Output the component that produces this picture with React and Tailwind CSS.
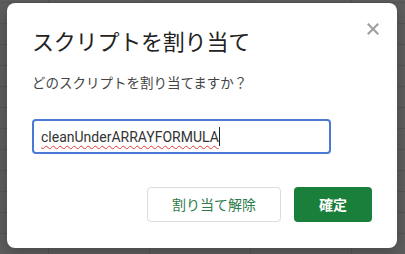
import React from 'react';

const cjk = "font-['Noto_Sans_CJK_JP','Noto_Sans',sans-serif]";

function CloseIcon() {
  return (
    <svg width="12" height="12" viewBox="0 0 12 12" className="block">
      <path d="M1.5 1.5 L10.5 10.5 M10.5 1.5 L1.5 10.5" stroke="#a0a0a0" strokeWidth="2.2" strokeLinecap="square" />
    </svg>
  );
}

export default function App() {
  return (
    <div className="w-[405px] h-[254px] overflow-hidden bg-[#5e5e5e] bg-[linear-gradient(to_right,#545454_1px,transparent_1px),linear-gradient(to_bottom,#545454_1px,transparent_1px)] bg-[size:101px_21px] bg-[position:48px_2px] pt-[3px] pl-[7px]">
      <div className={`relative w-[390px] h-[245px] bg-white rounded-[8px] shadow-[0_4px_16px_rgba(0,0,0,0.25)] pl-[25px] pr-[25px] pt-[22px] ${cjk}`}>
        <button className="absolute right-[18px] top-[20px] p-0">
          <CloseIcon />
        </button>

        <h2 className="text-[22px] leading-[30px] text-[#222] font-normal tracking-[-0.2px]">スクリプトを割り当て</h2>

        <p className="mt-[17px] text-[13.5px] leading-[20px] text-[#444]">どのスクリプトを割り当てますか？</p>

        <div className="mt-[27px] w-[299px] h-[35px] border-2 border-[#4a7ad6] rounded-[4px] flex items-center pl-[7px]">
          <span className="font-['Roboto',sans-serif] text-[14px] text-[#333] underline decoration-wavy decoration-[#e53935] decoration-[1px] underline-offset-[3px] leading-none">
            cleanUnderARRAYFORMULA
          </span>
          <span className="w-px h-[19px] bg-[#222]"></span>
        </div>

        <div className="mt-[33px] flex justify-end gap-[13px]">
          <button className="w-[134px] h-[35px] border border-[#dadce0] rounded-[4px] text-[14px] text-[#2e7d4a] bg-white">
            割り当て解除
          </button>
          <button className="w-[78px] h-[35px] rounded-[4px] bg-[#1a7f3a] text-white text-[14px] font-bold">
            確定
          </button>
        </div>
      </div>
    </div>
  );
}
